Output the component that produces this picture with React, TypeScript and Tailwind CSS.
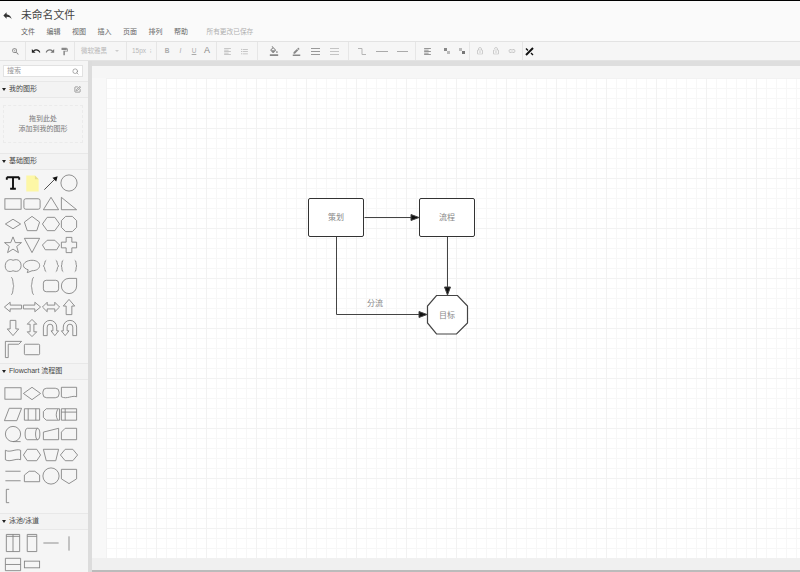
import type { ReactNode } from "react";
import { LuSearch, LuSquarePen } from "react-icons/lu";
import {
  MdBorderColor,
  MdFormatAlignLeft,
  MdFormatColorFill,
  MdFormatListBulleted,
  MdFormatPaint,
  MdLink,
  MdLockOpen,
  MdLockOutline,
  MdRedo,
  MdReply,
  MdUndo,
  MdZoomIn,
} from "react-icons/md";

const cjk = "font-['Liberation_Sans','Noto_Sans_CJK_SC',sans-serif]";
const menus = ["文件", "编辑", "视图", "插入", "页面", "排列", "帮助"];

const S = "#808080";

// one shape of the palette
const Tile = ({ children }: { children: ReactNode }) => (
  <svg width="20" height="20" viewBox="-0.5 -0.5 21 21" fill="none" stroke={S} strokeWidth="0.9" className="block shrink-0">
    {children}
  </svg>
);

const basicShapes: ReactNode[] = [
  <path d="M3.500 4h13M10 4v12M7 16h6M3.500 4v2.500M16.500 4v2.500" stroke="#111" strokeWidth="2" />,
  <>
    <path d="M4 2h9l4 4v13H4z" fill="#fdf7a6" stroke="none" />
    <path d="M13 2l4 4h-4z" fill="#e6df8d" stroke="none" />
  </>,
  <>
    <path d="M3 17L14 6" stroke="#333" strokeWidth="0.9" />
    <path d="M17 3l-1.500 5.500-4-4z" fill="#111" stroke="none" />
  </>,
  <circle cx="10" cy="10" r="8.500" />,
  <rect x="1.500" y="4.500" width="17" height="11" />,
  <rect x="1.500" y="4.500" width="17" height="11" rx="2" />,
  <path d="M10 3l8 13H2z" />,
  <path d="M2 3l16 13H2z" />,
  <path d="M10 5l8 5-8 5-8-5z" />,
  <path d="M10 2l8 6-3 9H5L2 8z" />,
  <path d="M6 3h8l5 7-5 7H6l-5-7z" />,
  <path d="M6.500 2h7L18 6.500v7L13.500 18h-7L2 13.500v-7z" />,
  <path d="M10 1.500l2.400 6h6.500l-5 4 1.800 6.500-5.700-3.700L4.300 18l1.800-6.500-5-4h6.500z" />,
  <path d="M2 3h16l-8 15z" />,
  <path d="M6 5h8l5 5-3 5H4l-3-5z" />,
  <path d="M7 2h6v5h5v6h-5v5H7v-5H2V7h5z" />,
  <path d="M5 4c2-1 3-1 5 0 3-1 5-1 7 1 2 2 2 7 0 9-2 2-4 2-7 1-2 1-4 1-6 0-3-2-3-9 1-11z" />,
  <path d="M10 4c5 0 8 2.500 8 5.500s-3 5.500-8 5.500l-5 2 1-3c-3-1-5-2.500-5-4.500C1 6.500 5 4 10 4z" />,
  <path d="M5 4c-2 0-1 5-3 6 2 1 1 6 3 6M15 4c2 0 1 5 3 6-2 1-1 6-3 6" />,
  <path d="M4 4c-2 0-1 5-2 6 1 1 0 6 2 6M16 4c2 0 1 5 2 6-1 1 0 6-2 6" />,
  <path d="M8 1c2.500 0 1.500 8 3 9-1.500 1-.5 9-3 9" />,
  <path d="M12 1c-2.500 0-1.500 8-3 9 1.500 1 .5 9 3 9" />,
  <rect x="2" y="4" width="16" height="12" rx="3" />,
  <path d="M10 2h8v8a8 8 0 0 1-16 0 8 8 0 0 1 8-8z" />,
];

const arrowShapes: ReactNode[] = [
  <path d="M1 10l6-5v3h12v4H7v3z" />,
  <path d="M19 10l-6-5v3H1v4h12v3z" />,
  <path d="M1 10l5-5v3h8V5l5 5-5 5v-3H6v3z" />,
  <path d="M10 2l6 7h-3v9H7V9H4z" />,
  <path d="M10 18l6-7h-3V2H7v9H4z" />,
  <path d="M10 1l5 5h-3v8h3l-5 5-5-5h3V6H5z" />,
  <path d="M2 18V9a7 7 0 0 1 14 0v4h2l-4 5-4-5h2V9a3 3 0 0 0-6 0v9z" />,
  <path d="M18 18V9a7 7 0 0 0-14 0v4H2l4 5 4-5H8V9a3 3 0 0 1 6 0v9z" />,
  <path d="M2 19V2h17l-3 3H5v14z" />,
  <rect x="2" y="5" width="16" height="11" rx="1" />,
];

const flowShapes: ReactNode[] = [
  <rect x="1.500" y="4.500" width="17" height="12" />,
  <path d="M10 4l9 6.500-9 6.500-9-6.500z" />,
  <rect x="1.500" y="5" width="17" height="10" rx="4" />,
  <path d="M2 4h16v10c-5-2-10 3-16 0z" />,
  <path d="M6 4h13l-5 13H1z" />,
  <path d="M2 4.500h16v12H2zM6 4.500v12M14 4.500v12" />,
  <path d="M5 4.500h14v12H5l-3-3V7.500z M17 5c-2 4-2 8 0 11" />,
  <path d="M2 4.500h16v12H2zM6 4.500v12M2 8h16" />,
  <>
    <circle cx="10" cy="10" r="8" />
    <path d="M10 18h8" />
  </>,
  <path d="M5 4h11c3 0 3 12 0 12H5c-3 0-3-12 0-12zM16 4c-3 0-3 12 0 12" />,
  <path d="M2 8l16-4v12H2z" />,
  <path d="M6 4h12v12H2V8z" />,
  <path d="M2 5c5 3 11-2 16 0v10c-5-2-11 3-16 0z" />,
  <path d="M5 4h10l4 6-4 6H5l-4-6z" />,
  <path d="M2 4h16l-3 12H5z" />,
  <path d="M6 4h8l5 6-5 6H6l-5-6z" />,
  <path d="M2 5h16M2 15h16" />,
  <path d="M2 16V9l5-4h6l5 4v7z" />,
  <circle cx="10" cy="10" r="8.500" />,
  <path d="M2 3h16v10l-8 5-8-5z" />,
  <path d="M6 3H3v14h3" />,
];

const poolShapes: ReactNode[] = [
  <path d="M3 1h14v18H3zM10 1v18M3 3h14" />,
  <path d="M5 1h10v18H5zM5 3h10" />,
  <path d="M2 10h16" />,
  <path d="M10 3v15" />,
  <path d="M2 4h16v13H2zM2 10.500h16" />,
  <rect x="2" y="7" width="16" height="7" />,
];

const Palette = ({ items }: { items: ReactNode[] }) => (
  <div className="grid grid-cols-[repeat(4,18.8px)] gap-y-[0.7px] pl-[3px]">
    {items.map((shape, i) => (
      <Tile key={i}>{shape}</Tile>
    ))}
  </div>
);

const SectionHead = ({ title, right }: { title: string; right?: ReactNode }) => (
  <div className="flex h-[17px] shrink-0 items-center border-y border-[#e8e8e8] bg-[#f3f3f3] pl-[2px] pr-[7px] text-[7px] text-[#444]">
    <span className="mr-[2px] h-0 w-0 border-x-[2px] border-t-[3px] border-x-transparent border-t-[#222]" />
    <span className="ml-[1px] flex-1">{title}</span>
    {right}
  </div>
);

const Sep = () => <div className="mx-[3px] h-[18px] w-px shrink-0 bg-[#e6e6e6]" />;

const Cell = ({ w, children }: { w: string; children: ReactNode }) => (
  <div className={`flex shrink-0 items-center justify-center ${w}`}>{children}</div>
);

const Dash = ({ w }: { w: string }) => <div className={`h-px bg-[#aaa] ${w}`} />;

const Toolbar = () => {
  const off = "text-[#b8b8b8]";
  return (
    <div className="flex h-[20px] shrink-0 items-center border-y border-[#e3e3e3] bg-[#f6f6f6] pl-[9px] text-[6.500px] text-[#aaa]">
      <Cell w="w-[13px]"><MdZoomIn size={9} className="text-[#777]" /></Cell>
      <Sep />
      <Cell w="w-[14px]"><MdUndo size={10} className="text-[#222]" /></Cell>
      <Cell w="w-[14px]"><MdRedo size={10} className="text-[#777]" /></Cell>
      <Cell w="w-[14px]"><MdFormatPaint size={9} className="text-[#888]" /></Cell>
      <Sep />
      <Cell w="w-[32px]"><span className={off}>微软雅黑</span></Cell>
      <Cell w="w-[13px]"><span className="h-0 w-0 border-x-[2px] border-t-[2px] border-x-transparent border-t-[#ccc]" /></Cell>
      <Sep />
      <Cell w="w-[18px]"><span className={off}>15px</span></Cell>
      <Cell w="w-[5px]"><span className="text-[5px] leading-[4px] text-[#999]">⁝</span></Cell>
      <Sep />
      <Cell w="w-[14px]"><span className="font-bold">B</span></Cell>
      <Cell w="w-[13px]"><span className="italic">I</span></Cell>
      <Cell w="w-[14px]"><span className="underline">U</span></Cell>
      <Cell w="w-[12px]"><span className="text-[9px] text-[#888]">A</span></Cell>
      <Sep />
      <Cell w="w-[14px]"><MdFormatAlignLeft size={9} className={off} /></Cell>
      <Cell w="w-[20px]"><MdFormatListBulleted size={9} className={off} /></Cell>
      <Sep />
      <Cell w="w-[25px]"><MdFormatColorFill size={10} className="text-[#888]" /></Cell>
      <Cell w="w-[21px]"><MdBorderColor size={9} className="text-[#888]" /></Cell>
      <Cell w="w-[17px]">
        <svg width="9" height="7" viewBox="0 0 9 7" stroke="#999"><path d="M0 .5h9M0 3.500h9M0 6.500h9" /></svg>
      </Cell>
      <Cell w="w-[21px]">
        <svg width="9" height="7" viewBox="0 0 9 7" stroke="#c4c4c4"><path d="M0 .5h9M0 3.500h9M0 6.500h9" /></svg>
      </Cell>
      <Sep />
      <Cell w="w-[20px]">
        <svg width="10" height="9" viewBox="0 0 10 9" fill="none" stroke="#b5b5b5"><path d="M1 1.500h4v6h4" /></svg>
      </Cell>
      <Cell w="w-[20px]"><Dash w="w-[12px]" /></Cell>
      <Cell w="w-[20px]"><Dash w="w-[11px]" /></Cell>
      <Sep />
      <Cell w="w-[17px]"><MdFormatAlignLeft size={9} className="text-[#777]" /></Cell>
      <Cell w="w-[22px]">
        <svg width="8" height="8" viewBox="0 0 8 8"><path d="M1 1h3v3H1z" fill="#888" /><path d="M4 4h3v3H4z" fill="#bbb" /></svg>
      </Cell>
      <Cell w="w-[8px]">
        <svg width="8" height="8" viewBox="0 0 8 8"><path d="M1 1h3v3H1z" fill="#bbb" /><path d="M4 4h3v3H4z" fill="#777" /></svg>
      </Cell>
      <Sep />
      <Cell w="w-[14px]"><MdLockOutline size={8} className={off} /></Cell>
      <Cell w="w-[17px]"><MdLockOpen size={8} className={off} /></Cell>
      <Cell w="w-[15px]"><MdLink size={8} className={off} /></Cell>
      <Sep />
      <Cell w="w-[6px]">
        <svg width="9" height="9" viewBox="0 0 9 9" className="shrink-0" stroke="#111" strokeWidth="2" fill="none"><path d="M1 8l7-7" /><path d="M1 1.500l2 2M6 6l2 2" strokeWidth="1.400" /></svg>
      </Cell>
    </div>
  );
};

const Sidebar = () => (
  <aside className="flex w-[88px] shrink-0 flex-col overflow-hidden bg-[#f5f5f5]">
    <div className="flex h-[20px] shrink-0 items-center pl-[3px] pr-[5px]">
      <div className="flex h-[12px] w-full items-center justify-between border border-[#e2e2e2] bg-white px-[3px] text-[7px] text-[#999]">
        搜索
        <LuSearch size={7} className="text-[#777]" />
      </div>
    </div>
    <SectionHead title="我的图形" right={<LuSquarePen size={7} className="text-[#666]" />} />
    <div className="h-[55px] shrink-0 pl-[3px] pr-[5px] pt-[7px]">
      <div className="flex h-[38px] flex-col items-center justify-center border border-dashed border-[#ebebeb] text-[7px] leading-[10px] text-[#777]">
        <span>拖到此处</span>
        <span>添加到我的图形</span>
      </div>
    </div>
    <SectionHead title="基础图形" />
    <div className="h-[193px] shrink-0 pt-[3px]">
      <Palette items={[...basicShapes, ...arrowShapes]} />
    </div>
    <SectionHead title="Flowchart 流程图" />
    <div className="h-[133px] shrink-0 pt-[3px]">
      <Palette items={flowShapes} />
    </div>
    <SectionHead title="泳池/泳道" />
    <div className="pt-[3px]">
      <Palette items={poolShapes} />
    </div>
  </aside>
);

const nodeText = "absolute flex items-center justify-center text-[8px] text-[#888]";

const Diagram = () => (
  <>
    <svg className="absolute left-0 top-0" width="694" height="480" fill="none" stroke="#444" strokeWidth="1">
      <path d="M258.500 139.500H308" />
      <path d="M313 139.500l-8-3v6z" fill="#111" />
      <path d="M341.500 159v53" />
      <path d="M341.500 217l-3-8h6z" fill="#111" />
      <path d="M230.500 159v77.500H316" />
      <path d="M321 236.500l-8-3v6z" fill="#111" />
      <path d="M330.500 217.500h21L361.500 228v17l-11 11h-20L321.500 245v-17z" fill="#fff" strokeWidth="1.200" />
    </svg>
    <div className={`${nodeText} left-[202px] top-[120px] h-[39px] w-[56px] rounded-[2px] border border-[#333] bg-white`}>策划</div>
    <div className={`${nodeText} left-[313px] top-[120px] h-[39px] w-[56px] rounded-[2px] border border-[#333] bg-white`}>流程</div>
    <div className={`${nodeText} left-[321px] top-[218px] h-[39px] w-[40px]`}>目标</div>
    <div className={`${nodeText} left-[259px] top-[220px] h-[12px] w-[20px]`}>分流</div>
  </>
);

export default function App() {
  return (
    <div className={`flex h-[572px] w-[800px] flex-col overflow-hidden bg-white ${cjk}`}>
      <div className="h-px shrink-0 bg-black" />
      <header className="h-[40px] shrink-0 bg-[#fafafa]">
        <div className="flex h-[25px] items-center pt-[4px]">
          <MdReply size={11} className="ml-[2px] text-[#333]" />
          <span className="ml-[8px] text-[10.800px] text-[#444]">未命名文件</span>
        </div>
        <nav className="flex h-[12px] items-center gap-[11.500px] pl-[21px] text-[7px] text-[#666]">
          {menus.map((m) => (
            <span key={m}>{m}</span>
          ))}
          <span className="ml-[7px] text-[6.700px] text-[#b0b0b0]">所有更改已保存</span>
        </nav>
      </header>
      <Toolbar />
      <main className="flex min-h-0 flex-1">
        <Sidebar />
        <div className="w-[4px] shrink-0 bg-[#dcdcdc]" />
        <div className="flex min-w-0 flex-1 flex-col bg-[#f8f8f8]">
          <div className="h-[5px] shrink-0 bg-[#dedede]" />
          <div className="h-[12px] shrink-0 bg-[#f6f6f6]" />
          <div className="relative ml-[14px] h-[480px] shrink-0 bg-white bg-[linear-gradient(#f2f2f2_1px,transparent_1px),linear-gradient(90deg,#f2f2f2_1px,transparent_1px),linear-gradient(#f7f7f7_1px,transparent_1px),linear-gradient(90deg,#f7f7f7_1px,transparent_1px)] bg-[size:50px_50px,50px_50px,10px_10px,10px_10px]">
            <Diagram />
          </div>
          <div className="min-h-0 flex-1 bg-[#f0f0f0]" />
          <div className="h-[2px] shrink-0 bg-[#bbb]" />
        </div>
      </main>
    </div>
  );
}
